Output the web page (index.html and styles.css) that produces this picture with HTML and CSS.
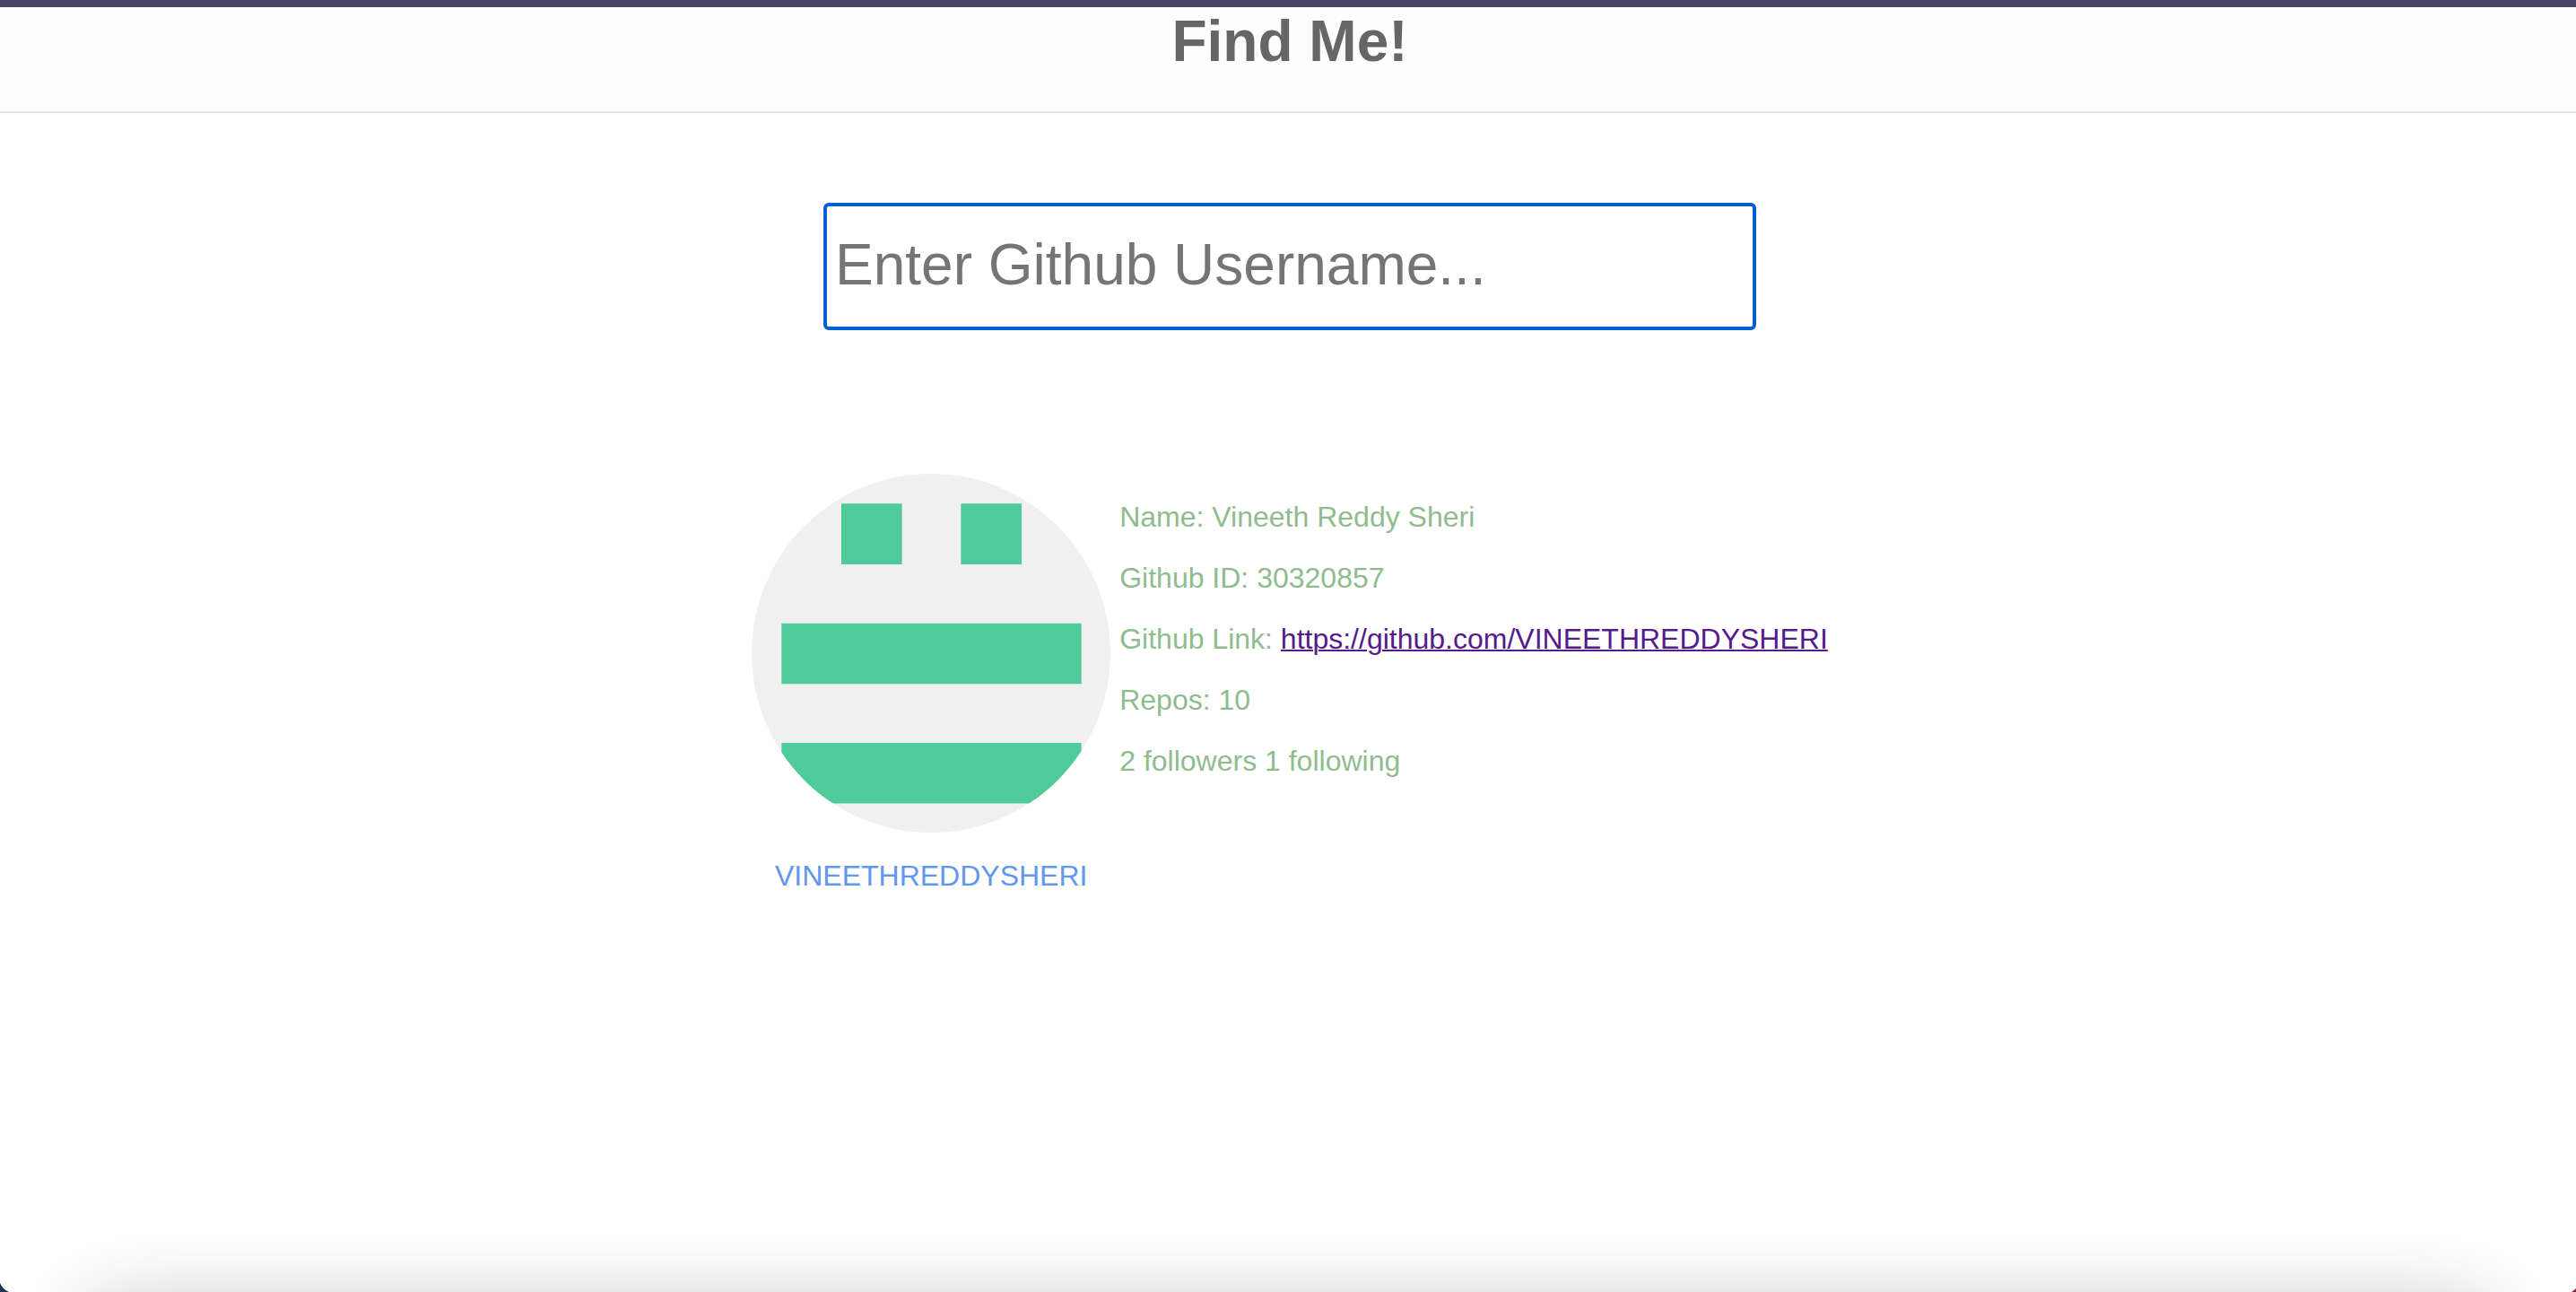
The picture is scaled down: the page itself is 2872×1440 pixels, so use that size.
FILE: index.html
```html
<!DOCTYPE html>
<html lang="en">
<head>
<meta charset="utf-8">
<title>Find Me!</title>
<link rel="stylesheet" href="styles.css">
</head>
<body>
<header class="header">
  <h1 class="title">Find Me!</h1>
</header>
<main class="content">
  <form class="search">
    <input class="search-input" type="text" placeholder="Enter Github Username..." aria-label="Github username">
  </form>
  <section class="profile">
    <div class="identity">
      <svg class="avatar" viewBox="0 0 420 420" role="img" aria-label="Avatar">
        <path fill="#f0f0f0" d="M0 0h420v420H0z"/>
        <path fill="#4ecb99" d="M105 35h71v71h-71zM245 35h71v71h-71zM35 175h351v71H35zM35 315h351v71H35z"/>
      </svg>
      <p class="login">VINEETHREDDYSHERI</p>
    </div>
    <div class="details">
      <p class="detail">Name: Vineeth Reddy Sheri</p>
      <p class="detail">Github ID: 30320857</p>
      <p class="detail">Github Link: <a class="link" href="https://github.com/VINEETHREDDYSHERI">https://github.com/VINEETHREDDYSHERI</a></p>
      <p class="detail">Repos: 10</p>
      <p class="detail">2 followers 1 following</p>
    </div>
  </section>
</main>
<div class="dock-shadow"></div>
<svg class="corner corner-left" viewBox="0 0 10 10" aria-hidden="true"><path d="M0 0Q3 7 10 10H0z"/></svg>
<svg class="corner corner-right" viewBox="0 0 10 10" aria-hidden="true"><path d="M10 6Q8 8 5 10H10z"/></svg>
</body>
</html>
```
FILE: styles.css
```css
* {
  box-sizing: border-box;
}

body {
  margin: 0;
  min-height: 100vh;
  overflow: hidden;
  background: #fff;
  font-family: "Liberation Sans", Helvetica, Arial, sans-serif;
  font-size: 32px;
  line-height: 36px;
}

p {
  margin: 0;
}

.header {
  padding: 0 0 40px 4px;
  border-top: 8px solid #4b4066;
  border-bottom: 2px solid #e1e1e1;
  background: #fdfdfd;
}

.title {
  margin: 0;
  color: #666;
  font-size: 64px;
  line-height: 76px;
  text-align: center;
}

.content {
  display: flex;
  flex-direction: column;
  align-items: center;
  gap: 160px;
  padding: 100px 0 0 4px;
}

.search-input {
  display: block;
  width: 1040px;
  max-width: 100vw;
  padding: 28px 9px 32px;
  border: 4px solid #0060d1;
  border-radius: 6px;
  outline: none;
  background: #fff;
  font: 64px/74px "Liberation Sans", Arial, sans-serif;
}

.search-input::placeholder {
  color: #757575;
}

.profile {
  display: flex;
  gap: 10px;
}

.identity {
  display: flex;
  flex-direction: column;
  gap: 30px;
  align-items: center;
}

.avatar {
  width: 400px;
  height: 400px;
  border-radius: 50%;
}

.login {
  color: #6197ed;
}

.details {
  display: flex;
  flex-direction: column;
  gap: 32px;
  padding-top: 30px;
}

.detail {
  color: #8fbc8f;
}

.link {
  color: #551a8b;
  text-decoration-thickness: 2px;
}

.dock-shadow {
  position: fixed;
  top: 100%;
  left: 100px;
  right: 100px;
  height: 200px;
  border-radius: 20px;
  box-shadow: 0 20px 90px rgba(0, 0, 0, 0.28);
}

.corner {
  position: fixed;
  bottom: 0;
  width: 10px;
  height: 10px;
}

.corner-left {
  left: 0;
  fill: #1b365a;
}

.corner-right {
  right: 0;
  fill: #7d2748;
}
```
